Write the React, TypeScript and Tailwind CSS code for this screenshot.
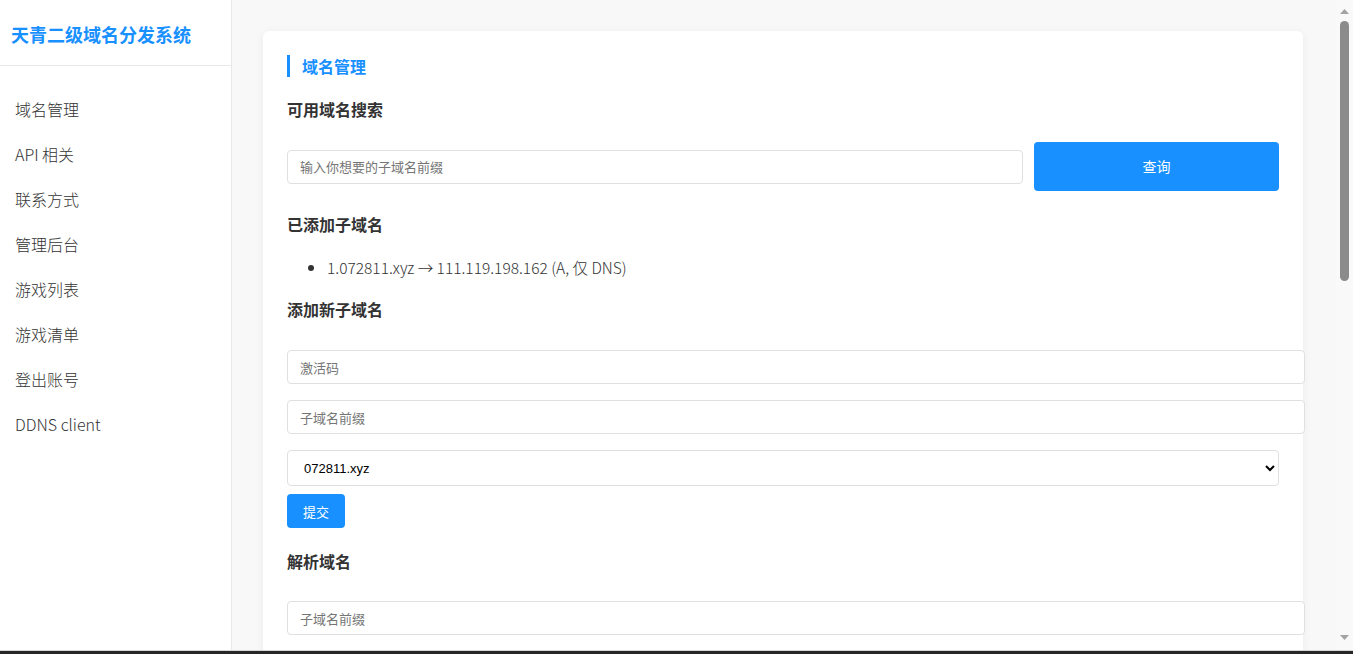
import React, { useState } from 'react';

const navItems = ['域名管理', 'API 相关', '联系方式', '管理后台', '游戏列表', '游戏清单', '登出账号', 'DDNS client'];

const inputCls =
  'box-content block h-[32px] w-full px-3 border border-[#e0e0e0] rounded-[4px] bg-white text-[13px] text-[#333] placeholder:text-[#757575] outline-none';
const selectCls =
  'block h-[36px] w-full pl-3 pr-2 border border-[#e0e0e0] rounded-[4px] bg-white text-[13px] text-black font-["Liberation_Sans",sans-serif] outline-none';
const btnCls = 'h-[34px] px-4 rounded-[4px] bg-[#1890ff] text-white text-[13px] leading-none';

const SectionTitle = ({ children, className = '' }: { children: React.ReactNode; className?: string }) => (
  <h3 className={`text-[16px] font-bold leading-6 text-[#333] ${className}`}>{children}</h3>
);

// the page scrollbar, drawn as in the screenshot
const ScrollBar = () => (
  <div className="flex w-[17px] shrink-0 flex-col bg-[#f9f9f9]">
    <div className="flex h-[20px] items-center justify-center pt-[2px]">
      <svg width="9" height="5" viewBox="0 0 9 5">
        <polygon points="0,5 4.5,0 9,5" fill="#a3a3a3" />
      </svg>
    </div>
    <div className="flex-1 px-[4px] pt-[1px]">
      <div className="h-[260px] rounded-full bg-[#8b8b8b]" />
    </div>
    <div className="flex h-[20px] items-center justify-center pb-[6px]">
      <svg width="9" height="5" viewBox="0 0 9 5">
        <polygon points="0,0 9,0 4.5,5" fill="#a3a3a3" />
      </svg>
    </div>
  </div>
);

export default function App() {
  const [active] = useState('域名管理');

  return (
    <div className="flex h-screen flex-col bg-white font-['Noto_Sans_CJK_SC',sans-serif]">
      <div className="flex min-h-0 flex-1 border-b border-[#d6d6d6]">
        {/* Sidebar */}
        <aside className="w-[232px] shrink-0 border-r border-[#e8e8e8] bg-white">
          <div className="flex h-[66px] items-center border-b border-[#e8e8e8] px-[11px] pt-[2px]">
            <h1 className="text-[18px] font-bold leading-6 text-[#1890ff]">天青二级域名分发系统</h1>
          </div>
          <nav className="pt-[20px]">
            {navItems.map((item) => (
              <a
                key={item}
                href="#"
                className={`flex h-[45px] items-center px-[15px] text-[16px] font-light text-[#333] ${active === item ? '' : ''}`}
              >
                {item}
              </a>
            ))}
          </nav>
        </aside>

        {/* Main */}
        <main className="min-w-0 flex-1 overflow-hidden bg-[#f8f8f8] pl-[31px] pr-[33px] pt-[31px]">
          <div className="min-h-[700px] rounded-md bg-white p-6 shadow-[0_2px_10px_rgba(0,0,0,0.06)]">
            <h2 className="border-l-[3px] border-[#1890ff] pl-3 text-[16px] font-bold leading-[22px] text-[#1890ff]">域名管理</h2>

            <SectionTitle className="mt-[20px]">可用域名搜索</SectionTitle>
            <div className="mt-[21px] flex items-center gap-[11px]">
              <input
                type="text"
                placeholder="输入你想要的子域名前缀"
                className="h-[34px] min-w-0 flex-1 rounded-[4px] border border-[#e0e0e0] px-3 text-[13px] text-[#333] outline-none placeholder:text-[#757575]"
              />
              <button className="h-[49px] w-[245px] shrink-0 rounded-[4px] bg-[#1890ff] text-[14px] text-white">查询</button>
            </div>

            <SectionTitle className="mt-[21px]">已添加子域名</SectionTitle>
            <ul className="mt-[19px] list-disc pl-10 text-[15.5px] font-light leading-6 text-[#333]">
              <li>1.072811.xyz → 111.119.198.162 (A, 仅 DNS)</li>
            </ul>

            <SectionTitle className="mt-[18px]">添加新子域名</SectionTitle>
            <input type="text" placeholder="激活码" className={`${inputCls} mt-[29px]`} />
            <input type="text" placeholder="子域名前缀" className={`${inputCls} mt-4`} />
            <select className={`${selectCls} mt-4`} defaultValue="072811.xyz">
              <option value="072811.xyz">072811.xyz</option>
            </select>
            <button className={`${btnCls} mt-2`}>提交</button>

            <SectionTitle className="mt-[21px]">解析域名</SectionTitle>
            <input type="text" placeholder="子域名前缀" className={`${inputCls} mt-[28px]`} />
          </div>
        </main>

        <ScrollBar />
      </div>
      <div className="h-[3px] shrink-0 bg-[#262626]" />
    </div>
  );
}
